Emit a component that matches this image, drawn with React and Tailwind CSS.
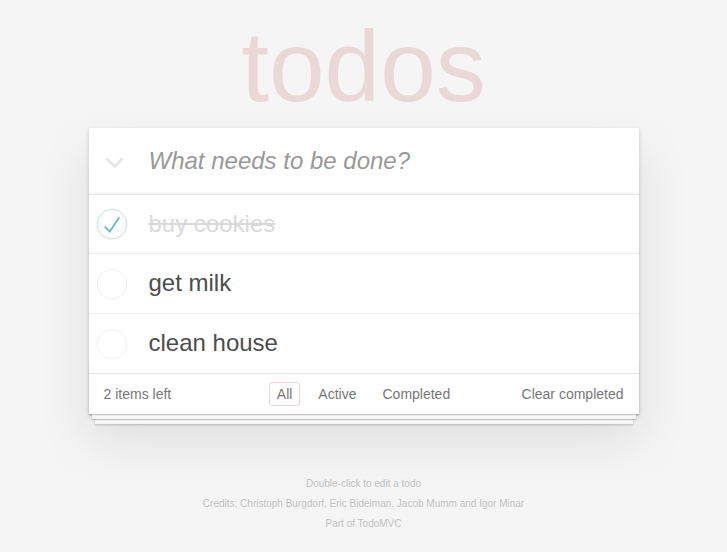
const todos = [
  { id: 1, title: 'buy cookies', completed: true },
  { id: 2, title: 'get milk', completed: false },
  { id: 3, title: 'clean house', completed: false },
];

function Check({ done }) {
  return (
    <svg width="40" height="40" viewBox="-10 -18 100 135" className="shrink-0">
      <circle cx="50" cy="50" r="50" fill="none" stroke={done ? '#bddad5' : '#ededed'} strokeWidth="3" />
      {done && <path fill="#5dc2af" d="M72 25L42 71 27 56l-4 4 20 20 34-52z" />}
    </svg>
  );
}

function TodoItem({ todo, last }) {
  return (
    <li className={`flex items-center text-2xl ${last ? '' : 'border-b border-[#ededed]'}`}>
      <Check done={todo.completed} />
      <label
        className={`ml-[5px] pl-[15px] pr-[60px] py-[15px] leading-[1.2] ${
          todo.completed ? 'text-[#d9d9d9] line-through' : 'text-[#4d4d4d]'
        }`}
      >
        {todo.title}
      </label>
    </li>
  );
}

export default function App() {
  const left = todos.filter((t) => !t.completed).length;

  return (
    <div className="min-h-screen bg-[#f5f5f5] font-['Liberation_Sans',Arial,sans-serif] text-sm text-[#4d4d4d] pt-4">
      <div className="max-w-[550px] mx-auto">
        <h1 className="h-[100px] text-[100px] leading-[100px] font-thin text-center text-[rgba(175,47,47,0.15)]">
          todos
        </h1>

        <section className="mt-3 bg-white relative shadow-[0_2px_4px_0_rgba(0,0,0,0.2),0_25px_50px_0_rgba(0,0,0,0.1)]">
          <header className="flex items-center shadow-[inset_0_-2px_1px_rgba(0,0,0,0.03)]">
            <div className="w-[60px] shrink-0 pl-4 pt-1">
              <svg width="19" height="12" viewBox="0 0 19 12">
                <polyline points="1.5,1.5 9.5,9.5 17.5,1.5" fill="none" stroke="#e6e6e6" strokeWidth="3" />
              </svg>
            </div>
            <input
              className="flex-1 min-w-0 py-4 pr-4 text-2xl leading-[1.4] outline-none bg-transparent text-[#4d4d4d] placeholder:italic placeholder:text-[#999]"
              placeholder="What needs to be done?"
            />
          </header>

          <ul className="border-t border-[#e6e6e6]">
            {todos.map((t, i) => (
              <TodoItem key={t.id} todo={t} last={i === todos.length - 1} />
            ))}
          </ul>

          <footer className="relative h-[41px] px-[15px] border-t border-[#e6e6e6] text-[#777] grid grid-cols-[1fr_auto_1fr] items-center before:content-[''] before:absolute before:inset-x-0 before:bottom-0 before:h-[50px] before:overflow-hidden before:shadow-[0_1px_1px_rgba(0,0,0,0.2),0_8px_0_-3px_#f6f6f6,0_9px_1px_-3px_rgba(0,0,0,0.2),0_16px_0_-6px_#f6f6f6,0_17px_2px_-6px_rgba(0,0,0,0.2)]">
            <span className="leading-5">
              <strong className="font-normal">{left}</strong> items left
            </span>
            <ul className="flex gap-[10px] relative">
              <li>
                <a className="block px-[7px] py-[3px] border border-[rgba(175,47,47,0.2)] rounded-[3px] leading-4" href="#/">
                  All
                </a>
              </li>
              <li>
                <a className="block px-[7px] py-[3px] border border-transparent rounded-[3px] leading-4" href="#/active">
                  Active
                </a>
              </li>
              <li>
                <a className="block px-[7px] py-[3px] border border-transparent rounded-[3px] leading-4" href="#/completed">
                  Completed
                </a>
              </li>
            </ul>
            <button className="justify-self-end leading-5 text-[#777] relative">Clear completed</button>
          </footer>
        </section>

        <footer className="mt-[65px] flex flex-col gap-[10px] text-[10px] leading-none text-[#bfbfbf] text-center [text-shadow:0_1px_0_rgba(255,255,255,0.5)]">
          <p>Double-click to edit a todo</p>
          <p>
            Credits: <a href="#">Christoph Burgdorf</a>, <a href="#">Eric Bidelman</a>, <a href="#">Jacob Mumm</a> and{' '}
            <a href="#">Igor Minar</a>
          </p>
          <p>
            Part of <a href="#">TodoMVC</a>
          </p>
        </footer>
      </div>
    </div>
  );
}
